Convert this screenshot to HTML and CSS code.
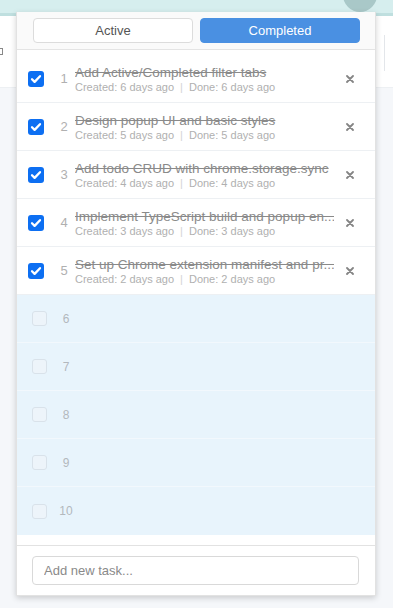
FILE: index.html
```html
<!DOCTYPE html>
<html lang="en">
<head>
    <meta charset="UTF-8">
    <meta name="viewport" content="width=device-width, initial-scale=1.0">
    <title>Todo Popup</title>
    <link rel="stylesheet" href="styles.css">
</head>
<body>
    <div class="browser">
        <div class="toolbar">
            <span class="avatar"></span>
        </div>
        <div class="page-top">
            <span class="page-icon"></span>
            <span class="page-rule"></span>
        </div>
        <div class="page-rest"></div>
    </div>

    <div class="popup">
        <div class="tabs">
            <button class="tab">Active</button>
            <button class="tab tab-selected">Completed</button>
        </div>

        <ul class="todo-list">
            <li class="todo done">
                <span class="check"><svg viewBox="0 0 16 16"><path d="M4 8.3l2.6 2.6L12 5.2"/></svg></span>
                <span class="num">1</span>
                <div class="body">
                    <div class="title">Add Active/Completed filter tabs</div>
                    <div class="meta">Created: 6 days ago<span class="sep">|</span>Done: 6 days ago</div>
                </div>
                <button class="remove"><svg viewBox="0 0 8 8"><path d="M1 1l6 6M7 1l-6 6"/></svg></button>
            </li>
            <li class="todo done">
                <span class="check"><svg viewBox="0 0 16 16"><path d="M4 8.3l2.6 2.6L12 5.2"/></svg></span>
                <span class="num">2</span>
                <div class="body">
                    <div class="title">Design popup UI and basic styles</div>
                    <div class="meta">Created: 5 days ago<span class="sep">|</span>Done: 5 days ago</div>
                </div>
                <button class="remove"><svg viewBox="0 0 8 8"><path d="M1 1l6 6M7 1l-6 6"/></svg></button>
            </li>
            <li class="todo done">
                <span class="check"><svg viewBox="0 0 16 16"><path d="M4 8.3l2.6 2.6L12 5.2"/></svg></span>
                <span class="num">3</span>
                <div class="body">
                    <div class="title">Add todo CRUD with chrome.storage.sync</div>
                    <div class="meta">Created: 4 days ago<span class="sep">|</span>Done: 4 days ago</div>
                </div>
                <button class="remove"><svg viewBox="0 0 8 8"><path d="M1 1l6 6M7 1l-6 6"/></svg></button>
            </li>
            <li class="todo done">
                <span class="check"><svg viewBox="0 0 16 16"><path d="M4 8.3l2.6 2.6L12 5.2"/></svg></span>
                <span class="num">4</span>
                <div class="body">
                    <div class="title">Implement TypeScript build and popup en...</div>
                    <div class="meta">Created: 3 days ago<span class="sep">|</span>Done: 3 days ago</div>
                </div>
                <button class="remove"><svg viewBox="0 0 8 8"><path d="M1 1l6 6M7 1l-6 6"/></svg></button>
            </li>
            <li class="todo done">
                <span class="check"><svg viewBox="0 0 16 16"><path d="M4 8.3l2.6 2.6L12 5.2"/></svg></span>
                <span class="num">5</span>
                <div class="body">
                    <div class="title">Set up Chrome extension manifest and pr...</div>
                    <div class="meta">Created: 2 days ago<span class="sep">|</span>Done: 2 days ago</div>
                </div>
                <button class="remove"><svg viewBox="0 0 8 8"><path d="M1 1l6 6M7 1l-6 6"/></svg></button>
            </li>
            <li class="todo empty"><span class="check"></span><span class="num">6</span></li>
            <li class="todo empty"><span class="check"></span><span class="num">7</span></li>
            <li class="todo empty"><span class="check"></span><span class="num">8</span></li>
            <li class="todo empty"><span class="check"></span><span class="num">9</span></li>
            <li class="todo empty"><span class="check"></span><span class="num">10</span></li>
        </ul>

        <div class="footer">
            <input type="text" class="new-task" placeholder="Add new task...">
        </div>
    </div>
</body>
</html>
```

FILE: styles.css
```css
:root {
    --accent: #4a90e2;
    --check: #0d6ff2;
    --muted: #8a8a8a;
    --faint: #b0b0b0;
    --empty-bg: #e8f4fc;
}

* {
    box-sizing: border-box;
    margin: 0;
    padding: 0;
}

html, body {
    height: 100%;
}

body {
    font-family: "Liberation Sans", Arial, sans-serif;
    background-color: #f5f7fa;
    color: #333;
    overflow: hidden;
}

/* browser behind the popup */
.browser {
    display: flex;
    flex-direction: column;
    height: 100%;
}

.toolbar {
    height: 16px;
    background-color: #d6eeee;
    border-bottom: 3px solid #bfdfdf;
    position: relative;
    overflow: hidden;
}

.avatar {
    position: absolute;
    left: 343px;
    top: -22px;
    width: 34px;
    height: 34px;
    border-radius: 50%;
    background-color: #a9c8c8;
}

.page-top {
    height: 72px;
    background-color: #fff;
    border-bottom: 1px solid #edf0f3;
    position: relative;
}

.page-icon {
    position: absolute;
    left: -4px;
    top: 32px;
    width: 7px;
    height: 7px;
    border: 1px solid #888;
}

.page-rule {
    position: absolute;
    left: 384px;
    top: 19px;
    width: 1px;
    height: 36px;
    background-color: #e3e6ea;
}

.page-rest {
    flex: 1;
    background-color: #f5f7fa;
}

/* popup */
.popup {
    position: absolute;
    top: 12px;
    left: 16px;
    width: 360px;
    height: 584px;
    background-color: #fff;
    border: 1px solid #e2e2e2;
    border-top: none;
    box-shadow: 0 2px 6px rgba(0, 0, 0, 0.18);
    display: flex;
    flex-direction: column;
}

.tabs {
    display: flex;
    gap: 7px;
    padding: 6px 15px 6px 16px;
    background-color: #fafafa;
    border-bottom: 1px solid #e4e4e4;
}

.tab {
    flex: 1;
    height: 25px;
    border: 1px solid #dcdcdc;
    border-radius: 4px;
    background-color: #fff;
    color: #555;
    font-family: inherit;
    font-size: 13px;
}

.tab-selected {
    background-color: var(--accent);
    border-color: var(--accent);
    color: #fff;
}

.todo-list {
    list-style: none;
    padding-top: 5px;
    flex: 1;
}

.todo {
    display: flex;
    align-items: center;
    height: 48px;
    padding-left: 11px;
    padding-right: 17px;
    border-bottom: 1px solid #edf0f3;
}

.check {
    flex: none;
    width: 16px;
    height: 16px;
    border-radius: 3px;
    background-color: var(--check);
    display: flex;
    align-items: center;
    justify-content: center;
}

.check svg {
    width: 16px;
    height: 16px;
    fill: none;
    stroke: #fff;
    stroke-width: 2.3;
    stroke-linecap: round;
    stroke-linejoin: round;
}

.num {
    flex: none;
    width: 16px;
    margin-left: 12px;
    text-align: center;
    font-size: 13px;
    color: var(--faint);
}

.body {
    flex: 1;
    min-width: 0;
    margin-left: 3px;
    padding-right: 8px;
    padding-top: 2px;
}

.title {
    font-size: 13.5px;
    line-height: 15px;
    color: var(--muted);
    text-decoration: line-through;
    white-space: nowrap;
    overflow: hidden;
}

.meta {
    font-size: 11px;
    line-height: 15px;
    color: var(--faint);
}

.sep {
    color: #d4d4d4;
    margin: 0 6px;
}

.remove {
    flex: none;
    width: 16px;
    height: 16px;
    border: none;
    background: none;
    display: flex;
    align-items: center;
    justify-content: center;
}

.remove svg {
    width: 8px;
    height: 8px;
    stroke: #858585;
    stroke-width: 1.8;
    stroke-linecap: round;
}

.todo.empty {
    background-color: var(--empty-bg);
    border-bottom-color: #f2f8fd;
    padding-left: 15px;
}

.todo.empty:last-child {
    border-bottom: none;
}

.todo.empty .check {
    width: 15px;
    height: 15px;
    background-color: #edf4fa;
    border: 1px solid #d9e2ea;
}

.todo.empty .num {
    margin-left: 11px;
    font-size: 12px;
    color: #b3b8bd;
}

.footer {
    border-top: 1px solid #e2e2e2;
    padding: 10px 16px 10px 15px;
}

.new-task {
    width: 100%;
    height: 29px;
    padding: 0 11px;
    border: 1px solid #d9d9d9;
    border-radius: 4px;
    font-family: inherit;
    font-size: 13px;
    color: #333;
    outline: none;
}

.new-task::placeholder {
    color: #8a8a8a;
}
```
